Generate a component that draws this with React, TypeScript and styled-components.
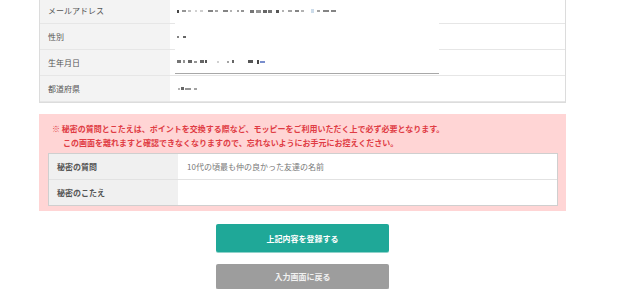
import React from "react";
import styled, { createGlobalStyle } from "styled-components";

const Global = createGlobalStyle`
  html, body { margin: 0; padding: 0; background: #fff; }
  body { font-family: "Noto Sans CJK JP", "Noto Sans", sans-serif; overflow: hidden; }
`;

const Page = styled.div`
  width: 527px;
  margin: -3px 0 0 39px;
  display: flex;
  flex-direction: column;
`;

const InfoTable = styled.div`
  position: relative;
  border: 1px solid #dcdcdc;
  display: flex;
  flex-direction: column;
`;

const InfoRow = styled.div`
  display: grid;
  grid-template-columns: 130px 1fr;
  height: 25px;
  border-bottom: 1px solid #e6e6e6;
  &:last-child { border-bottom: none; }
`;

const InfoLabel = styled.div`
  background: #f3f3f3;
  display: flex;
  align-items: center;
  padding-left: 8px;
  font-size: 8px;
  color: #555;
`;

const InfoValue = styled.div`
  display: flex;
  align-items: center;
  padding-left: 8px;
  background: #fff;
`;

const Mask = styled.div`
  position: absolute;
  left: 135px;
  top: 0;
  width: 264px;
  height: 75px;
  background: #fff;
  border-bottom: 1px solid #a8a8a8;
  display: flex;
  flex-direction: column;
`;

const MaskLine = styled.div<{ $h: number }>`
  height: ${(p) => p.$h}px;
  display: flex;
  align-items: center;
  padding-left: 2px;
`;

const Blur = styled.div`
  display: flex;
  align-items: center;
`;

const Frag = styled.span<{ $w: number; $c: string; $gap: number; $h: number }>`
  display: inline-block;
  width: ${(p) => p.$w}px;
  height: ${(p) => p.$h}px;
  background: ${(p) => p.$c};
  margin-right: ${(p) => p.$gap}px;
  opacity: 0.9;
`;

type F = [number, number, string?, number?];

const BlurText = ({ frags }: { frags: F[] }) => (
  <Blur>
    {frags.map(([w, g, c, h], i) => (
      <Frag key={i} $w={w} $gap={g} $c={c || "#6a6a6a"} $h={h || 2} />
    ))}
  </Blur>
);

const mailFrags: F[] = [
  [2, 3, "#333", 3], [4, 2, "#8a8a8a"], [3, 4, "#bbb"], [2, 3, "#ccc"], [3, 5, "#c9c9c9"],
  [5, 2, "#777"], [3, 5, "#999"], [5, 2, "#777"], [2, 5, "#aaa"], [2, 2, "#999"], [3, 6, "#888"],
  [4, 2, "#666", 3], [5, 2, "#888", 3], [4, 1, "#555", 3], [4, 4, "#666", 3], [3, 3, "#444", 3],
  [2, 4, "#aaa"], [4, 3, "#999"], [4, 2, "#777"], [3, 7, "#aaa"], [3, 3, "#c8d8e8", 4], [3, 3, "#999"],
  [6, 2, "#777"], [5, 0, "#777"],
];
const sexFrags: F[] = [[2, 4, "#777", 2], [3, 0, "#555", 2]];
const birthFrags: F[] = [
  [4, 2, "#666", 3], [2, 3, "#888", 3], [4, 2, "#555", 3], [3, 3, "#888"], [4, 1, "#555", 3],
  [2, 10, "#444", 3], [2, 8, "#ccc"], [2, 3, "#999"], [2, 14, "#555", 3], [5, 4, "#444", 3],
  [2, 1, "#333", 4], [5, 0, "#6a82c8", 2],
];
const prefFrags: F[] = [[2, 1, "#aaa", 2], [3, 1, "#555", 3], [6, 3, "#888", 2], [3, 0, "#999", 2]];

const Notice = styled.div`
  margin-top: 11px;
  background: #ffd5d5;
  padding: 8px 8px 5px 9px;
  display: flex;
  flex-direction: column;
`;

const Warning = styled.p`
  margin: 0 0 3px 4px;
  padding-left: 11px;
  text-indent: -11px;
  font-size: 8px;
  line-height: 14px;
  font-weight: 700;
  color: #e03c44;
  white-space: nowrap;
`;

const SecretTable = styled.div`
  border: 1px solid #cfcfcf;
  background: #fff;
  display: flex;
  flex-direction: column;
`;

const SecretRow = styled.div`
  display: grid;
  grid-template-columns: 129px 1fr;
  height: 25px;
  border-bottom: 1px solid #e2e2e2;
  &:last-child { border-bottom: none; }
`;

const SecretLabel = styled.div`
  background: #f0f0f0;
  display: flex;
  align-items: center;
  padding-left: 8px;
  font-size: 8px;
  font-weight: 700;
  color: #555;
`;

const SecretValue = styled.div`
  display: flex;
  align-items: center;
  padding-left: 9px;
  font-size: 8px;
  color: #777;
`;

const Buttons = styled.div`
  margin-top: 13px;
  display: flex;
  flex-direction: column;
  align-items: center;
  gap: 12px;
`;

const Button = styled.button<{ $variant: "primary" | "back" }>`
  width: 173px;
  height: ${(p) => (p.$variant === "primary" ? 28 : 25)}px;
  border: none;
  border-radius: 2px;
  background: ${(p) => (p.$variant === "primary" ? "#1fa898" : "#9d9d9d")};
  box-shadow: 0 1px 0 ${(p) => (p.$variant === "primary" ? "#8fd2ca" : "#cfcfcf")};
  color: ${(p) => (p.$variant === "primary" ? "#fff" : "#f1f1f1")};
  font-family: "Noto Sans CJK JP", "Noto Sans", sans-serif;
  font-size: 8px;
  font-weight: 700;
  padding: 0;
  cursor: pointer;
`;

export default function App() {
  return (
    <>
      <Global />
      <Page>
        <InfoTable>
          <InfoRow>
            <InfoLabel>メールアドレス</InfoLabel>
            <InfoValue />
          </InfoRow>
          <InfoRow>
            <InfoLabel>性別</InfoLabel>
            <InfoValue />
          </InfoRow>
          <InfoRow>
            <InfoLabel>生年月日</InfoLabel>
            <InfoValue />
          </InfoRow>
          <InfoRow>
            <InfoLabel>都道府県</InfoLabel>
            <InfoValue>
              <BlurText frags={prefFrags} />
            </InfoValue>
          </InfoRow>
          <Mask>
            <MaskLine $h={26}>
              <BlurText frags={mailFrags} />
            </MaskLine>
            <MaskLine $h={26}>
              <BlurText frags={sexFrags} />
            </MaskLine>
            <MaskLine $h={23}>
              <BlurText frags={birthFrags} />
            </MaskLine>
          </Mask>
        </InfoTable>

        <Notice>
          <Warning>
            ※ 秘密の質問とこたえは、ポイントを交換する際など、モッピーをご利用いただく上で必ず必要となります。
            <br />
            この画面を離れますと確認できなくなりますので、忘れないようにお手元にお控えください。
          </Warning>
          <SecretTable>
            <SecretRow>
              <SecretLabel>秘密の質問</SecretLabel>
              <SecretValue>10代の頃最も仲の良かった友達の名前</SecretValue>
            </SecretRow>
            <SecretRow>
              <SecretLabel>秘密のこたえ</SecretLabel>
              <SecretValue />
            </SecretRow>
          </SecretTable>
        </Notice>

        <Buttons>
          <Button $variant="primary">上記内容を登録する</Button>
          <Button $variant="back">入力画面に戻る</Button>
        </Buttons>
      </Page>
    </>
  );
}
